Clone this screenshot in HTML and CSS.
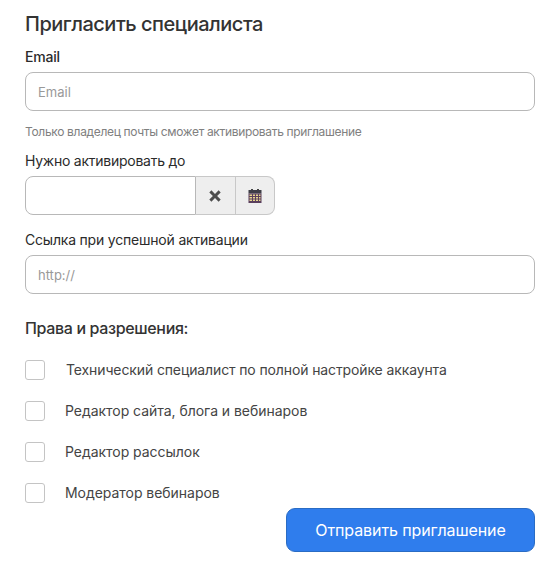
FILE: index.html
```html
<!DOCTYPE html>
<html>
  <head>
    <meta charset="utf-8">
    <title>Пригласить специалиста</title>
    <link rel="stylesheet" href="styles.css">
  </head>
  <body>
    <form class="invite">
      <h1 class="title">Пригласить специалиста</h1>

      <label class="label label-email">Email</label>
      <input class="field" type="text" placeholder="Email">
      <p class="hint">Только владелец почты сможет активировать приглашение</p>

      <label class="label label-date">Нужно активировать до</label>
      <div class="date-group">
        <input class="date-input" type="text">
        <span class="date-btn">
          <svg width="14" height="14" viewBox="0 0 14 14"><path d="M3.4 1.3 7 4.9l3.6-3.6 2.1 2.1L9.1 7l3.6 3.6-2.1 2.1L7 9.1l-3.6 3.6-2.1-2.1L4.9 7 1.3 3.4z" fill="#4d4d4d"/></svg>
        </span>
        <span class="date-btn">
          <svg width="14" height="14" viewBox="0 0 14 14">
            <rect x="3" y="0" width="2" height="2" fill="#444"/>
            <rect x="9" y="0" width="2" height="2" fill="#444"/>
            <rect x="0.5" y="1" width="13" height="3.5" fill="#3d3d46"/>
            <rect x="0.5" y="4.5" width="13" height="9.5" fill="#5a3f5c"/>
            <path d="M1.5 5.5h2.5V7H1.500zM5 5.500h2V7H5zM8 5.500h2V7H8zM11 5.500h1.500V7H11zM1.500 8h2.500v1.500H1.500zM5 8h2v1.500H5zM8 8h2v1.500H8zM11 8h1.500v1.500H11zM1.500 10.500h2.500V12H1.500zM5 10.500h2V12H5zM8 10.500h2V12H8zM11 10.500h1.500V12H11z" fill="#e6d68f"/>
          </svg>
        </span>
      </div>

      <label class="label label-link">Ссылка при успешной активации</label>
      <input class="field" type="text" placeholder="http://">

      <h2 class="subtitle">Права и разрешения:</h2>

      <div class="perms">
        <label class="perm"><span class="check"></span><span class="perm-first">Технический специалист по полной настройке аккаунта</span></label>
        <label class="perm"><span class="check"></span><span>Редактор сайта, блога и вебинаров</span></label>
        <label class="perm"><span class="check"></span><span>Редактор рассылок</span></label>
        <label class="perm"><span class="check"></span><span>Модератор вебинаров</span></label>
      </div>

      <div class="actions">
        <button class="submit" type="button">Отправить приглашение</button>
      </div>
    </form>
  </body>
</html>
```

FILE: styles.css
```css
* {
  box-sizing: border-box;
}
body {
  margin: 0;
  background: #fff;
  color: #2b2b2b;
  font-family: Inter, "Noto Sans", sans-serif;
}
.invite {
  padding: 12px 23px 0 25px;
}
.title {
  margin: 0;
  font-size: 20px;
  line-height: 24px;
  font-weight: 500;
  letter-spacing: -0.48px;
  color: #333;
}
.label {
  display: block;
  font-size: 14px;
  line-height: 18px;
  font-weight: 500;
  letter-spacing: -0.2px;
  color: #2b2b2b;
}
.label-email {
  margin-top: 12px;
  margin-bottom: 6px;
}
.label-date {
  margin-top: 13px;
  margin-bottom: 6px;
  font-weight: 400;
  letter-spacing: -0.25px;
}
.label-link {
  margin-top: 16px;
  margin-bottom: 6px;
  font-weight: 400;
}
.field {
  display: block;
  width: 100%;
  height: 39px;
  padding: 0 12px;
  border: 1px solid #b8b8b8;
  border-radius: 8px;
  background: #fff;
  font-family: inherit;
  font-size: 13px;
  outline: none;
}
.field::placeholder {
  color: #999;
  opacity: 1;
}
.hint {
  margin: 14px 0 0;
  font-size: 12px;
  line-height: 14px;
  letter-spacing: -0.33px;
  color: #808080;
}
.date-group {
  display: flex;
  width: 250px;
  height: 39px;
}
.date-input {
  flex: 1;
  min-width: 0;
  border: 1px solid #b8b8b8;
  border-radius: 8px 0 0 8px;
  outline: none;
}
.date-btn {
  display: flex;
  align-items: center;
  justify-content: center;
  width: 39.5px;
  background: #eee;
  border: 1px solid #c8c8c8;
  border-left: 0;
}
.date-btn:last-child {
  border-radius: 0 8px 8px 0;
}
.subtitle {
  margin: 24px 0 0;
  font-size: 16px;
  line-height: 20px;
  font-weight: 500;
  letter-spacing: -0.35px;
  color: #333;
}
.perms {
  display: flex;
  flex-direction: column;
  gap: 21px;
  margin-top: 22px;
}
.perm {
  display: flex;
  align-items: center;
  gap: 20px;
  font-size: 14px;
  line-height: 20px;
  letter-spacing: -0.04px;
  color: #444;
}
.perm-first {
  margin-left: 1px;
  letter-spacing: -0.12px;
}
.check {
  width: 20px;
  height: 20px;
  border: 1px solid #c4c4c4;
  border-radius: 3px;
  background: #fff;
}
.actions {
  display: flex;
  justify-content: flex-end;
  margin-top: 5px;
}
.submit {
  width: 249px;
  height: 44px;
  border: 1px solid #2a6cc4;
  border-radius: 9px;
  background: #2f7ded;
  color: #fff;
  font-family: inherit;
  font-size: 16px;
  letter-spacing: -0.1px;
}
```
